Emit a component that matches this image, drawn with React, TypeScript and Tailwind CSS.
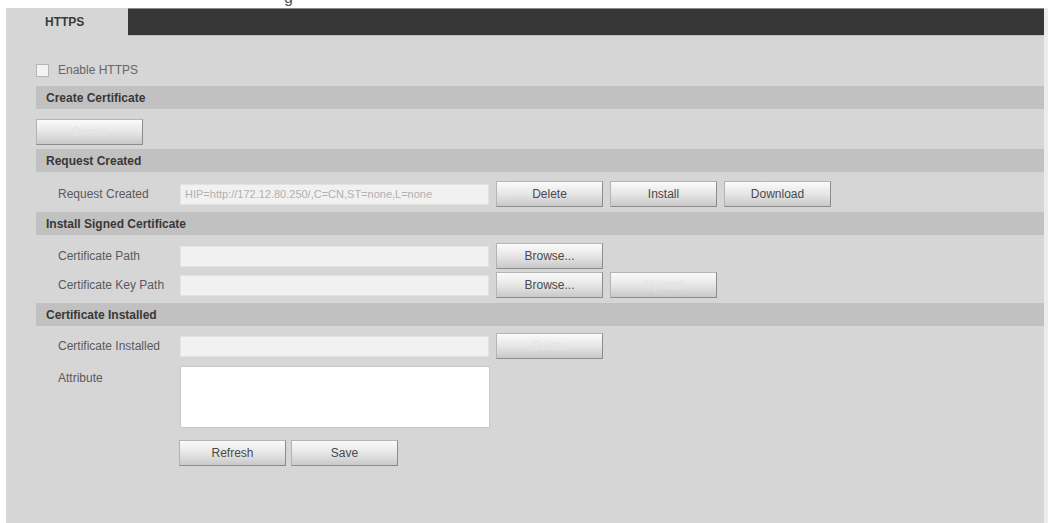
import React from 'react';

type BtnProps = { label: string; disabled?: boolean };

function Btn({ label, disabled }: BtnProps) {
  return (
    <button
      type="button"
      className={
        'w-[107px] h-[26px] shrink-0 border border-[#8c8c8c] border-t-[#b4b4b4] border-l-[#b4b4b4] bg-gradient-to-b from-[#fbfbfb] via-[#e6e6e6] to-[#c9c9c9] text-[12px] leading-none ' +
        (disabled ? 'text-[#e4e4e4]' : 'text-[#4a4a4a]')
      }
    >
      {label}
    </button>
  );
}

function Header({ title }: { title: string }) {
  return (
    <div className="h-[23px] bg-[#c1c1c1] flex items-center pl-[10px] text-[12px] font-bold text-[#383838]">
      {title}
    </div>
  );
}

function FieldRow({ label, value, children, className }: { label: string; value?: string; children?: React.ReactNode; className?: string }) {
  return (
    <div className={'flex items-center h-[26px] ' + (className || '')}>
      <div className="w-[144px] pl-[22px] text-[12px] text-[#5a5a5a] shrink-0">{label}</div>
      <div className="w-[309px] h-[21px] bg-[#f1f1f1] border border-[#e2e2e2] text-[11px] text-[#b0b0b0] pl-[4px] flex items-center overflow-hidden whitespace-nowrap shrink-0">
        {value}
      </div>
      <div className="flex gap-[7px] ml-[7px]">{children}</div>
    </div>
  );
}

export default function App() {
  return (
    <div className="w-[1048px] h-[523px] bg-white flex flex-col overflow-hidden" style={{ fontFamily: '"Liberation Sans", Arial, sans-serif' }}>
      {/* scrap of the page title above the panel */}
      <div className="h-[8px] overflow-hidden pl-[284px]">
        <div className="-mt-[14px] text-[16px] text-[#555]">g</div>
      </div>

      <div className="flex flex-1 ml-[6px]">
        <div className="flex-1 bg-[#d6d6d6] flex flex-col">
          {/* tab bar */}
          <div className="flex h-[28px]">
            <div className="w-[122px] pl-[39px] flex items-center text-[12px] font-bold text-[#3a3a3a]">HTTPS</div>
            <div className="flex-1 bg-[#363636] border-t border-[#8a8a8a] border-b border-b-[#bdbdbd]"></div>
          </div>

          <div className="pl-[30px] flex flex-col">
            {/* enable */}
            <div className="flex items-center gap-[9px] mt-[27px] h-[14px]">
              <div className="w-[13px] h-[13px] bg-[#f3f3f3] border border-[#b5b5b5]"></div>
              <span className="text-[12px] text-[#666]">Enable HTTPS</span>
            </div>

            <div className="mt-[9px]">
              <Header title="Create Certificate" />
            </div>
            <div className="mt-[10px]">
              <Btn label="Create" disabled />
            </div>

            <div className="mt-[4px]">
              <Header title="Request Created" />
            </div>
            <FieldRow label="Request Created" value="HIP=http://172.12.80.250/,C=CN,ST=none,L=none" className="mt-[9px]">
              <Btn label="Delete" />
              <Btn label="Install" />
              <Btn label="Download" />
            </FieldRow>

            <div className="mt-[5px]">
              <Header title="Install Signed Certificate" />
            </div>
            <FieldRow label="Certificate Path" className="mt-[8px]">
              <Btn label="Browse..." />
            </FieldRow>
            <FieldRow label="Certificate Key Path" className="mt-[3px]">
              <Btn label="Browse..." />
              <Btn label="Upload" disabled />
            </FieldRow>

            <div className="mt-[5px]">
              <Header title="Certificate Installed" />
            </div>
            <FieldRow label="Certificate Installed" className="mt-[7px]">
              <Btn label="Delete" disabled />
            </FieldRow>

            <div className="flex mt-[7px]">
              <div className="w-[144px] pl-[22px] pt-[3px] text-[12px] text-[#5a5a5a] shrink-0">Attribute</div>
              <div className="w-[310px] h-[62px] bg-white border border-[#c8c8c8]"></div>
            </div>

            <div className="flex gap-[5px] mt-[12px] ml-[143px]">
              <Btn label="Refresh" />
              <Btn label="Save" />
            </div>
          </div>
        </div>
        <div className="w-[4px] bg-[#ececec]"></div>
      </div>
    </div>
  );
}
